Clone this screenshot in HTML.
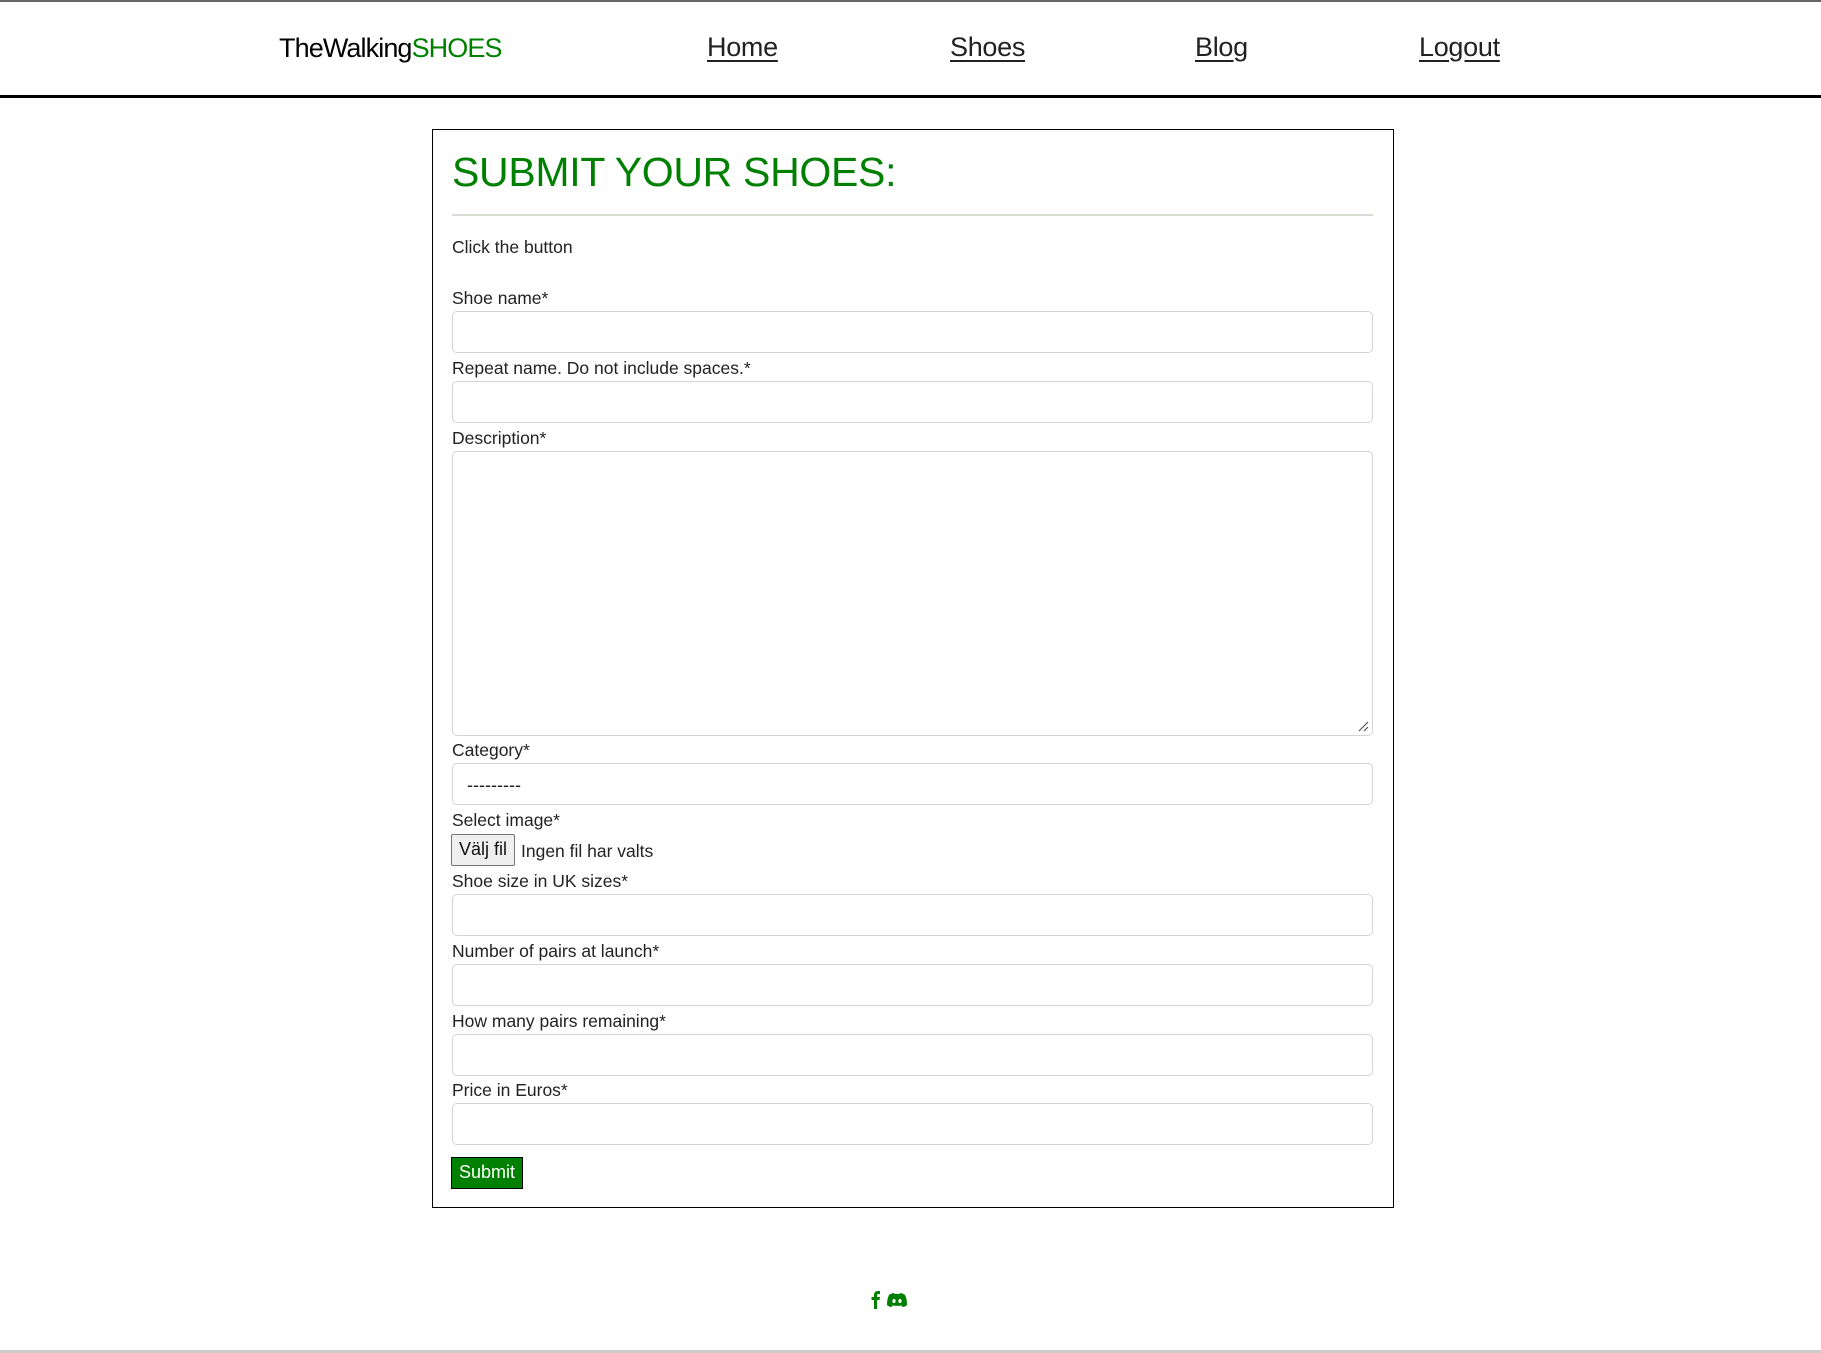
<!DOCTYPE html>
<html><head><meta charset="utf-8"><style>
*{box-sizing:border-box;margin:0;padding:0}
body{width:1821px;height:1353px;position:relative;background:#fff;font-family:"Liberation Sans",Arial,sans-serif;overflow:hidden;color:#212529}
.top{position:absolute;left:0;top:0;width:1821px;height:2px;background:#666}
.nav{position:absolute;left:0;top:95px;width:1821px;height:3px;background:#000}
.logo{position:absolute;left:279px;top:33px;font-size:27px;color:#000;letter-spacing:-0.9px}
.logo span{color:#008000}
.nl{position:absolute;top:32px;font-size:27px;color:#222;text-decoration:underline;text-underline-offset:4px;letter-spacing:-0.3px}
.card{position:absolute;left:432px;top:129px;width:962px;height:1079px;border:1.5px solid #000}
h1{position:absolute;left:452px;top:149px;font-size:41px;font-weight:normal;color:#008000;letter-spacing:-0.3px}
.hr{position:absolute;left:452px;top:214px;width:921px;height:2px;background:#d5ddd5}
.t{position:absolute;left:452px;font-size:17.5px;color:#222;margin-top:2px}
.in{position:absolute;left:452px;width:921px;border:1.5px solid #d3d3d3;border-radius:5px;background:#fff}
.btn{position:absolute;left:451px;top:834px;width:64px;height:32px;border:1.5px solid #767676;background:#efefef;border-radius:2px;font-size:18px;text-align:center;line-height:29px;color:#111}
.sub{position:absolute;left:451px;top:1157px;width:72px;height:32px;background:#008000;border:1.5px solid #000;color:#fff;font-size:18px;text-align:center;line-height:29px}
.bot{position:absolute;left:0;top:1350px;width:1821px;height:3px;background:#ccc}
</style></head><body>
<div class="top"></div>
<div class="logo">TheWalking<span>SHOES</span></div>
<div class="nl" style="left:707px">Home</div>
<div class="nl" style="left:950px">Shoes</div>
<div class="nl" style="left:1195px">Blog</div>
<div class="nl" style="left:1419px">Logout</div>
<div class="nav"></div>
<div class="card"></div>
<h1>SUBMIT YOUR SHOES:</h1>
<div class="hr"></div>
<div class="t" style="top:235px">Click the button</div>
<div class="t" style="top:286px">Shoe name*</div>
<div class="in" style="top:311px;height:42px"></div>
<div class="t" style="top:356px">Repeat name. Do not include spaces.*</div>
<div class="in" style="top:381px;height:42px"></div>
<div class="t" style="top:426px">Description*</div>
<div class="in" style="top:451px;height:285px"><svg style="position:absolute;right:3px;bottom:3px" width="12" height="12"><path d="M2 11L11 2M7 11L11 7" stroke="#555" stroke-width="1.2"/></svg></div>
<div class="t" style="top:738px">Category*</div>
<div class="in" style="top:763px;height:42px"><span style="position:absolute;left:14px;top:11px;font-size:18px;color:#222">---------</span></div>
<div class="t" style="top:808px">Select image*</div>
<div class="btn">Välj fil</div>
<div class="t" style="top:839px;left:521px">Ingen fil har valts</div>
<div class="t" style="top:869px">Shoe size in UK sizes*</div>
<div class="in" style="top:894px;height:42px"></div>
<div class="t" style="top:939px">Number of pairs at launch*</div>
<div class="in" style="top:964px;height:42px"></div>
<div class="t" style="top:1009px">How many pairs remaining*</div>
<div class="in" style="top:1034px;height:42px"></div>
<div class="t" style="top:1078px">Price in Euros*</div>
<div class="in" style="top:1103px;height:42px"></div>
<div class="sub">Submit</div>
<svg style="position:absolute;left:868px;top:1290px" width="44" height="20" viewBox="0 0 44 20">
<path d="M6 19V10H3.5V7H6V5C6 2.5 7.5 1 10 1H12V4H10.5C9.5 4 9 4.5 9 5.5V7H12L11.5 10H9V19Z" fill="#008000"/>
<path d="M21 5C23 3.5 25 3 26 3L26.5 4C28 3.8 30 3.8 31.5 4L32 3C33 3 35 3.5 37 5C38.5 8 39 11 39 15C37.5 16.5 35.5 17 34.5 17L33.5 15.5C32 16 26 16 24.5 15.5L23.5 17C22.5 17 20.5 16.5 19 15C19 11 19.5 8 21 5Z" fill="#008000"/>
<ellipse cx="26" cy="11" rx="1.6" ry="2" fill="#fff"/><ellipse cx="32" cy="11" rx="1.6" ry="2" fill="#fff"/>
</svg>
<div class="bot"></div>
</body></html>
